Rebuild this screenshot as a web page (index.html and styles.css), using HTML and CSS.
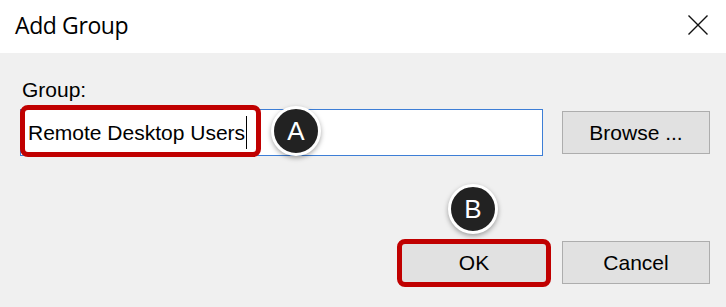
FILE: index.html
```html
<!DOCTYPE html>
<html>
<head>
<meta charset="utf-8">
<link rel="stylesheet" href="styles.css">
</head>
<body>
<div class="dialog">
  <div class="titlebar">
    <div class="title">Add Group</div>
    <svg class="close" width="20" height="20" viewBox="0 0 20 20"><path d="M0.5 0.5 L19.5 19.5 M19.5 0.5 L0.5 19.5" stroke="#111" stroke-width="1.4" fill="none"/></svg>
  </div>
  <div class="content">
    <div class="label">Group:</div>
    <div class="row">
      <div class="field">
        <div class="input"><span class="value">Remote Desktop Users</span><span class="caret"></span></div>
        <div class="hl-input"></div>
        <div class="badge badge-a">A</div>
      </div>
      <button class="btn">Browse ...</button>
    </div>
    <div class="actions">
      <div class="ok-wrap">
        <button class="btn">OK</button>
        <div class="hl-ok"></div>
        <div class="badge badge-b">B</div>
      </div>
      <button class="btn">Cancel</button>
    </div>
  </div>
</div>
</body>
</html>
```
FILE: styles.css
```css
html, body {
  margin: 0;
  padding: 0;
}
body {
  width: 726px;
  height: 307px;
  overflow: hidden;
  background: #f0f0f0;
}
.dialog {
  width: 726px;
  height: 307px;
  display: flex;
  flex-direction: column;
  background: #f0f0f0;
}
.titlebar {
  height: 53px;
  flex: none;
  background: #ffffff;
  display: flex;
  align-items: center;
  justify-content: space-between;
  padding: 0 18px 0 15px;
}
.title {
  font-family: "Open Sans", "Noto Sans", sans-serif;
  font-size: 23px;
  color: #000;
  letter-spacing: -0.4px;
  margin-top: -4px;
}
.close {
  display: block;
  margin-top: -4px;
}
.content {
  padding: 26px 16px 0 20px;
  font-family: "Liberation Sans", Arial, sans-serif;
  font-size: 21px;
  color: #000;
}
.label {
  padding-left: 2px;
  line-height: 22px;
  height: 22px;
}
.row {
  margin-top: 8px;
  display: flex;
  align-items: center;
  gap: 19px;
}
.field {
  position: relative;
  width: 523px;
  height: 47px;
}
.input {
  box-sizing: border-box;
  width: 523px;
  height: 47px;
  background: #fff;
  border: 1px solid #3d7ed6;
  display: flex;
  align-items: center;
  padding-left: 7px;
}
.value {
  position: relative;
  z-index: 2;
}
.caret {
  position: relative;
  z-index: 2;
  width: 1px;
  height: 33px;
  background: #000;
  margin-left: 1px;
}
.hl-input {
  position: absolute;
  left: 0;
  top: -4px;
  width: 241px;
  height: 52px;
  box-sizing: border-box;
  border: 5px solid #c00000;
  border-radius: 8px;
  background: #fff;
  z-index: 1;
}
.btn {
  box-sizing: border-box;
  width: 148px;
  height: 43px;
  background: #e1e1e1;
  border: 1px solid #adadad;
  font-family: "Liberation Sans", Arial, sans-serif;
  font-size: 21px;
  color: #000;
  padding: 0;
  margin: 0;
  flex: none;
}
.actions {
  margin-top: 85px;
  display: flex;
  justify-content: flex-end;
  gap: 14px;
}
.ok-wrap {
  position: relative;
  width: 148px;
  height: 43px;
}
.hl-ok {
  position: absolute;
  left: -3px;
  top: -2px;
  width: 154px;
  height: 48px;
  box-sizing: border-box;
  border: 5px solid #c00000;
  border-radius: 8px;
}
.badge {
  position: absolute;
  width: 50px;
  height: 50px;
  box-sizing: border-box;
  border-radius: 50%;
  background: #222222;
  border: 3px solid #ffffff;
  box-shadow: 0 2px 5px rgba(0, 0, 0, 0.35);
  color: #fff;
  font-family: "Liberation Sans", Arial, sans-serif;
  font-size: 26px;
  display: flex;
  align-items: center;
  justify-content: center;
  z-index: 3;
}
.badge-a {
  left: 251px;
  top: -3px;
}
.badge-b {
  left: 48px;
  top: -57px;
}
```
